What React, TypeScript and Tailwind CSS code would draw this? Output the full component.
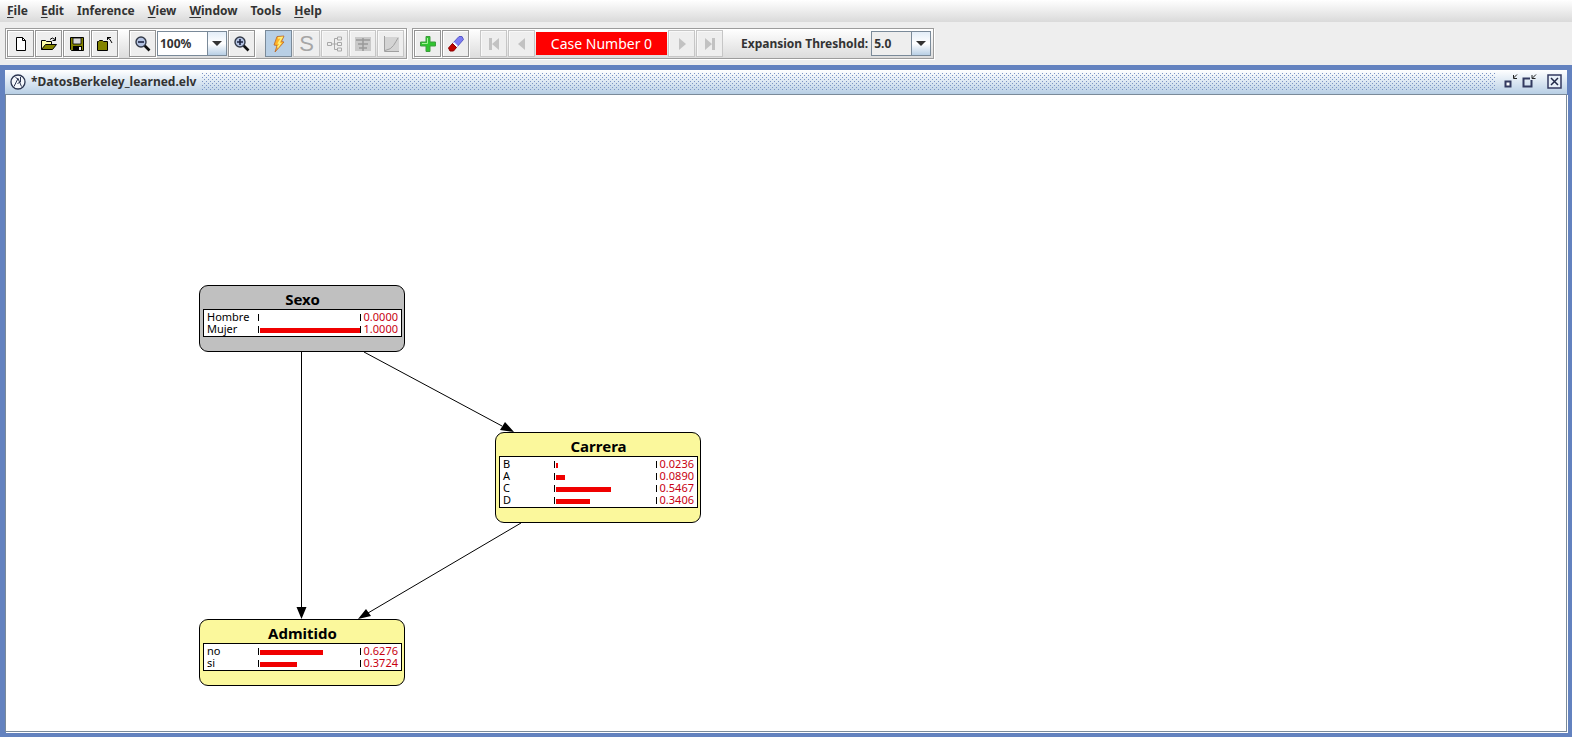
import type { ReactNode } from "react";

const menus = ["File", "Edit", "Inference", "View", "Window", "Tools", "Help"];
const underlined = new Set(["File", "Edit", "View", "Window", "Help"]);

function Bar({ children }: { children: ReactNode }) {
  return (
    <div className="flex h-[31px] items-center border border-[#9c9c9c] bg-linear-to-b from-white to-[#dcdcdc] p-px shadow-[inset_1px_1px_0_#fff,1px_1px_0_#fff]">
      {children}
    </div>
  );
}

function Tool({ label, children, active, disabled }: { label: string; children: ReactNode; active?: boolean; disabled?: boolean }) {
  const look = active
    ? "border-[#7a8a99] bg-[#b8cfe5]"
    : disabled
      ? "border-[#c6c6c6] bg-[#eeeeee] shadow-[inset_1px_1px_0_#f8f8f8]"
      : "border-[#949494] bg-[#eeeeee] shadow-[inset_1px_1px_0_#fff,1px_1px_0_#fff]";
  return (
    <button
      type="button"
      aria-label={label}
      aria-pressed={active}
      disabled={disabled}
      className={`mr-px flex size-[27px] shrink-0 items-center justify-center border ${look}`}
    >
      {children}
    </button>
  );
}

function Combo({ label, value, options, className }: { label: string; value: string; options: string[]; className: string }) {
  return (
    <div className={`relative mr-px h-[25px] border border-[#7a8a99] ${className}`}>
      <select
        id={label}
        aria-label={label}
        defaultValue={value}
        className="h-full w-full appearance-none pl-[2px] text-[12px] font-bold text-[#333333] outline-none"
      >
        {options.map((o) => (
          <option key={o}>{o}</option>
        ))}
      </select>
      <span className="pointer-events-none absolute inset-y-0 right-0 flex w-[19px] items-center justify-center border-l border-[#7a8a99] bg-linear-to-b from-[#e4eef8] via-white to-[#b8cfe5]">
        <svg width="10" height="5" viewBox="0 0 10 5" aria-hidden="true">
          <path d="M0 0h10L5 5z" fill="#333" />
        </svg>
      </span>
    </div>
  );
}

function Icon({ children, size = 18 }: { children: ReactNode; size?: number }) {
  return (
    <svg width={size} height={size} viewBox={`0 0 ${size} ${size}`} aria-hidden="true">
      {children}
    </svg>
  );
}

function Magnifier({ plus }: { plus?: boolean }) {
  return (
    <Icon>
      <path d="M10.5 10.5l5 5" stroke="#111" strokeWidth="2.6" />
      <circle cx="7" cy="7" r="5" fill="#b4c3e2" stroke="#333a48" strokeWidth="1.4" />
      <path d={plus ? "M4 7h6M7 4v6" : "M4 7h6"} stroke="#1c2440" strokeWidth="1.6" />
    </Icon>
  );
}

type State = { name: string; p: number };

function Node({ title, states, className }: { title: string; states: State[]; className: string }) {
  return (
    <section className={`absolute w-[206px] rounded-[9px] border border-black pt-[4px] pr-[2px] pb-[14px] pl-[3px] ${className}`}>
      <h2 className="text-center text-[15px] leading-[19px] font-bold text-black">{title}</h2>
      <div className="border border-black bg-white py-px pr-[3px] pl-[3px]">
        {states.map((s) => (
          <div key={s.name} className="flex h-[12px] items-center text-[11px] leading-[12px] text-black">
            <span className="w-[51px]">{s.name}</span>
            <span className="flex h-[7px] w-[103px] items-end border-x border-black pl-px">
              <span className="h-[5px] bg-[#f00000]" style={{ width: `${s.p * 100}%` }} />
            </span>
            <span className="flex-1 text-right text-[#c80010]">{s.p.toFixed(4)}</span>
          </div>
        ))}
      </div>
    </section>
  );
}

export default function App() {
  return (
    <div className="flex min-h-screen flex-col bg-[#eeeeee] font-['Noto_Sans','Open_Sans',sans-serif] text-[12px] text-[#333333]">
      <nav className="flex h-[22px] items-center gap-[13px] bg-linear-to-b from-white to-[#dadada] px-[7px] font-bold">
        {menus.map((m) => (
          <button key={m} type="button" className="leading-[20px]">
            {underlined.has(m) ? (
              <>
                <span className="underline underline-offset-2">{m[0]}</span>
                {m.slice(1)}
              </>
            ) : (
              m
            )}
          </button>
        ))}
      </nav>

      <div className="flex items-start gap-[5px] px-[5px] pt-[6px] pb-[6px]">
        <Bar>
          <Tool label="New">
            <Icon>
              <path d="M4.5 2.5h6l3 3v10h-9z" fill="#fff" stroke="#000" />
              <path d="M10.5 2.5v3h3" fill="none" stroke="#000" />
            </Icon>
          </Tool>
          <Tool label="Open">
            <Icon>
              <path d="M1.5 14.5v-9h4l1 1h5v3" fill="#ffffa8" stroke="#000" />
              <path d="M1.5 14.5l4-5h11l-4 5z" fill="#848400" stroke="#000" />
              <path d="M10 4.5q2-3 5 0M15.5 2v3.5H12.5" fill="none" stroke="#000" />
            </Icon>
          </Tool>
          <Tool label="Save">
            <Icon>
              <path d="M2.5 2.5h13v13h-12l-1-1z" fill="#848400" stroke="#000" />
              <path d="M5 3h8v6H5z" fill="#d8d8d8" stroke="#000" strokeWidth=".8" />
              <path d="M5 11h9v4H5z" fill="#000" />
              <path d="M11 12h2v3h-2z" fill="#eee" />
            </Icon>
          </Tool>
          <Tool label="Close">
            <Icon>
              <path d="M1.5 6.5h1l1-1h3l1 1h4v9h-10z" fill="#848400" stroke="#000" />
              <path d="M11 2.5h4M11.5 2v3M12 3l2 1.5 2 3.5" fill="none" stroke="#000" />
            </Icon>
          </Tool>
          <span className="w-[10px]" />
          <Tool label="Zoom out">
            <Magnifier />
          </Tool>
          <Combo label="Zoom" value="100%" options={["50%", "100%", "200%"]} className="w-[70px] bg-white" />
          <Tool label="Zoom in">
            <Magnifier plus />
          </Tool>
          <span className="w-[9px]" />
          <Tool label="Inference mode" active>
            <Icon>
              <path d="M7 1.5L14 1l-2.5 5.5L14 7 5 17l2-6.5-3-.5z" fill="#ffb327" stroke="#b8652a" strokeWidth=".8" />
              <path d="M8 3l4-.5-3.5 5.5 2 .5-3 4" fill="none" stroke="#fff27a" strokeWidth="1.4" />
            </Icon>
          </Tool>
          <Tool label="Sensitivity" disabled>
            <span className="font-['Liberation_Sans',sans-serif] text-[22px] leading-none text-[#a6a6a6]">S</span>
          </Tool>
          <Tool label="Decision tree" disabled>
            <Icon>
              <path d="M5 9h6M8.5 3.5v11M8.5 3.5h3M8.5 14.5h3" fill="none" stroke="#a8a8a8" />
              <path d="M1.5 7.5h4v3h-4zM11.5 2h4v3h-4zM11.5 7.5h4v3h-4zM11.5 13h4v3h-4z" fill="#eee" stroke="#a8a8a8" />
            </Icon>
          </Tool>
          <Tool label="Table" disabled>
            <Icon>
              <path d="M1 2h16v14H1z" fill="#c9c9c9" />
              <path d="M2 5h14M4 9h10M5 13h8M9 3v13" stroke="#999" strokeWidth="1.5" />
            </Icon>
          </Tool>
          <Tool label="Chart" disabled>
            <Icon>
              <path d="M2 2h15v14H2z" fill="#d4d4d4" />
              <path d="M2.5 1v15.5H17M3 15.500q6-1 8.500-5T16 3" fill="none" stroke="#a0a0a0" />
            </Icon>
          </Tool>
        </Bar>

        <Bar>
          <Tool label="Add case">
            <Icon>
              <path d="M7 1.5h4V7h5.5v4H11v5.5H7V11H1.5V7H7z" fill="#2fc52f" stroke="#3f9c3f" />
              <path d="M8.5 3v5.5H3" fill="none" stroke="#a6f29a" />
            </Icon>
          </Tool>
          <Tool label="Clear evidence">
            <Icon>
              <path d="M12 1.5h3l1.500 3-7 8-4-4z" fill="#7c7cf4" stroke="#5757c8" />
              <path d="M7 7l4 4-1.500 1.500-4-4z" fill="#fff" />
              <path d="M5.500 8.500l4 4-3 3.500H3l-1.500-3z" fill="#c00000" stroke="#8b0000" />
            </Icon>
          </Tool>
          <span className="w-[10px]" />
          <Tool label="First case" disabled>
            <Icon>
              <path d="M4 3h3v12H4zM14 3v12L7 9z" fill="#c2c2c2" />
            </Icon>
          </Tool>
          <Tool label="Previous case" disabled>
            <Icon>
              <path d="M12 3v12L5 9z" fill="#c2c2c2" />
            </Icon>
          </Tool>
          <output className="mr-px flex h-[23px] w-[131px] items-center justify-center bg-[#ff0000] text-[14px] text-white">Case Number 0</output>
          <Tool label="Next case" disabled>
            <Icon>
              <path d="M6 3v12l7-6z" fill="#c2c2c2" />
            </Icon>
          </Tool>
          <Tool label="Last case" disabled>
            <Icon>
              <path d="M4 3v12l7-6zM11 3h3v12h-3z" fill="#c2c2c2" />
            </Icon>
          </Tool>
          <label htmlFor="Threshold" className="ml-[17px] pr-[3px] font-bold">
            Expansion Threshold:
          </label>
          <Combo label="Threshold" value="5.0" options={["1.0", "5.0", "10.0"]} className="w-[60px] bg-[#eeeeee]" />
        </Bar>
      </div>

      <main className="flex flex-1 flex-col bg-[#6382bf] p-[5px]">
        <header className="flex h-[24px] items-center bg-linear-to-b from-white to-[#b8cfe5] pr-[5px] pb-px pl-[5px]">
          <svg width="16" height="16" viewBox="0 0 16 16" aria-hidden="true">
            <circle cx="8" cy="8" r="7" fill="#f4f7fb" stroke="#2b3550" strokeWidth="1.3" />
            <path d="M4 12.500L8 4.500l3.500 8M5.500 3.500L8 5M10.500 3v5l-3 1.500" fill="none" stroke="#2b3550" />
          </svg>
          <h1 className="ml-[5px] text-[12px] font-bold">*DatosBerkeley_learned.elv</h1>
          <div className="mr-[7px] ml-[6px] h-[18px] flex-1 bg-[conic-gradient(from_270deg_at_1px_1px,#7b93c4_90deg,transparent_0),conic-gradient(from_270deg_at_1px_1px,#7b93c4_90deg,transparent_0)] bg-size-[4px_4px] bg-position-[0_0,2px_2px]" />
          <div className="flex items-center gap-[2px]">
            <button type="button" aria-label="Minimize">
              <Icon size={16}>
                <path d="M2.5 7.5h5v5h-5z" fill="#fff" stroke="#333a60" strokeWidth="2" />
                <path d="M14 .5L10.500 4M10.500 1v3.500h3.500" fill="none" stroke="#222" />
              </Icon>
            </button>
            <button type="button" aria-label="Restore">
              <Icon size={16}>
                <path d="M9 4.500H2.500v8h8V6" fill="none" stroke="#333a60" strokeWidth="2" />
                <path d="M15 .5L11.500 4M11 1v3.500h3.500" fill="none" stroke="#222" />
              </Icon>
            </button>
            <button type="button" aria-label="Close window" className="ml-[8px]">
              <Icon size={15}>
                <path d="M1 1h13v13H1z" fill="#e8f0f8" stroke="#333a60" strokeWidth="1.5" />
                <path d="M4 4l7 7M11 4l-7 7" stroke="#222a48" strokeWidth="1.5" />
              </Icon>
            </button>
          </div>
        </header>
        <div className="relative min-h-[636px] flex-1 border border-[#7a8a99] bg-white shadow-[1px_1px_0_#fff]">
          <svg className="absolute top-0 left-0" width="720" height="620" viewBox="6 95 720 620" aria-hidden="true">
            <path d="M301.5 351v258M364 352l138 74M521 523L368 613" fill="none" stroke="#000" />
            <path d="M296.5 607h10l-5 12zM514 432l-14-2 5-8zM358 619l8-10 5 7z" fill="#000" />
          </svg>
          <Node title="Sexo" className="top-[190px] left-[193px] bg-[#c0c0c0]" states={[{ name: "Hombre", p: 0 }, { name: "Mujer", p: 1 }]} />
          <Node
            title="Carrera"
            className="top-[337px] left-[489px] bg-[#fbf89c]"
            states={[{ name: "B", p: 0.0236 }, { name: "A", p: 0.089 }, { name: "C", p: 0.5467 }, { name: "D", p: 0.3406 }]}
          />
          <Node title="Admitido" className="top-[524px] left-[193px] bg-[#fbf89c]" states={[{ name: "no", p: 0.6276 }, { name: "si", p: 0.3724 }]} />
        </div>
      </main>
    </div>
  );
}
